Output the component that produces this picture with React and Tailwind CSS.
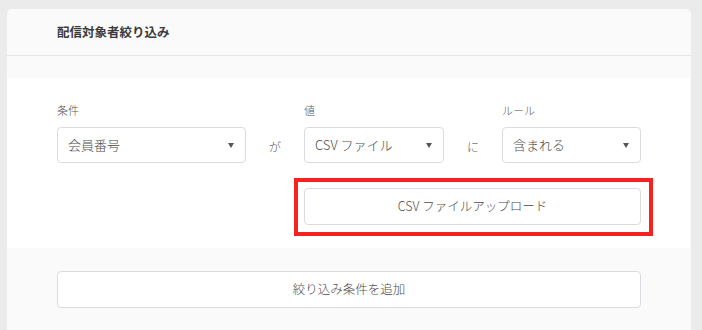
const font = { fontFamily: '"Noto Sans CJK JP", "Noto Sans", sans-serif' }

const Caret = () => (
  <svg width="6" height="5" viewBox="0 0 6 5">
    <path d="M0 0h6L3 5z" fill="#555" />
  </svg>
)

const Select = ({ value, width }) => (
  <div className={`${width} h-[36px] flex items-center justify-between pl-[10px] pr-[11px] bg-white border border-[#d9dce0] rounded-[4px]`}>
    <span className="text-[13px] font-light text-[#4a4a4a]">{value}</span>
    <Caret />
  </div>
)

export default function App() {
  return (
    <div className="w-[702px] h-[330px] bg-[#ebebeb] pt-[9px] pl-[7px] pr-[11px] overflow-hidden" style={font}>
      <div className="bg-[#fafafa] rounded-t-[5px] h-[330px]">
        {/* header */}
        <div className="h-[47px] border-b border-[#e6e6e6] pl-[50px] flex items-center">
          <h2 className="text-[12.5px] font-bold text-[#3a3a3a]">配信対象者絞り込み</h2>
        </div>

        <div className="h-[22px]" />

        {/* condition row */}
        <div className="bg-white mr-[1px] pl-[50px] pr-[49px] pt-[24px] pb-[23px]">
          <div className="flex items-end">
            <div className="flex flex-col">
              <label className="text-[11px] leading-[16px] font-light text-[#555] mb-[9px]">条件</label>
              <Select value="会員番号" width="w-[189px]" />
            </div>
            <div className="w-[58px] h-[36px] flex items-center justify-center text-[12px] font-light text-[#555] pt-[3px]">が</div>
            <div className="flex flex-col">
              <label className="text-[11px] leading-[16px] font-light text-[#555] mb-[9px]">値</label>
              <Select value="CSV ファイル" width="w-[140px]" />
            </div>
            <div className="w-[58px] h-[36px] flex items-center justify-center text-[12px] font-light text-[#555] pt-[3px]">に</div>
            <div className="flex flex-col">
              <label className="text-[11px] leading-[16px] font-light text-[#555] mb-[9px]">ルール</label>
              <Select value="含まれる" width="w-[139px]" />
            </div>
          </div>

          <div className="flex mt-[25px]">
            <div className="relative ml-[247px] w-[337px]">
              <button className="w-full h-[37px] bg-white border border-[#d9dce0] rounded-[4px] text-[12.5px] font-light text-[#4a4a4a]">
                CSV ファイルアップロード
              </button>
              <div className="absolute -left-[10px] -top-[10px] -right-[12px] -bottom-[11px] border-[4px] border-[#f62222]" />
            </div>
          </div>
        </div>

        {/* add condition */}
        <div className="pl-[50px] pt-[23px]">
          <button className="w-[584px] h-[37px] bg-white border border-[#d9dce0] rounded-[4px] text-[12.5px] font-light text-[#4a4a4a]">
            絞り込み条件を追加
          </button>
        </div>
      </div>
    </div>
  )
}
